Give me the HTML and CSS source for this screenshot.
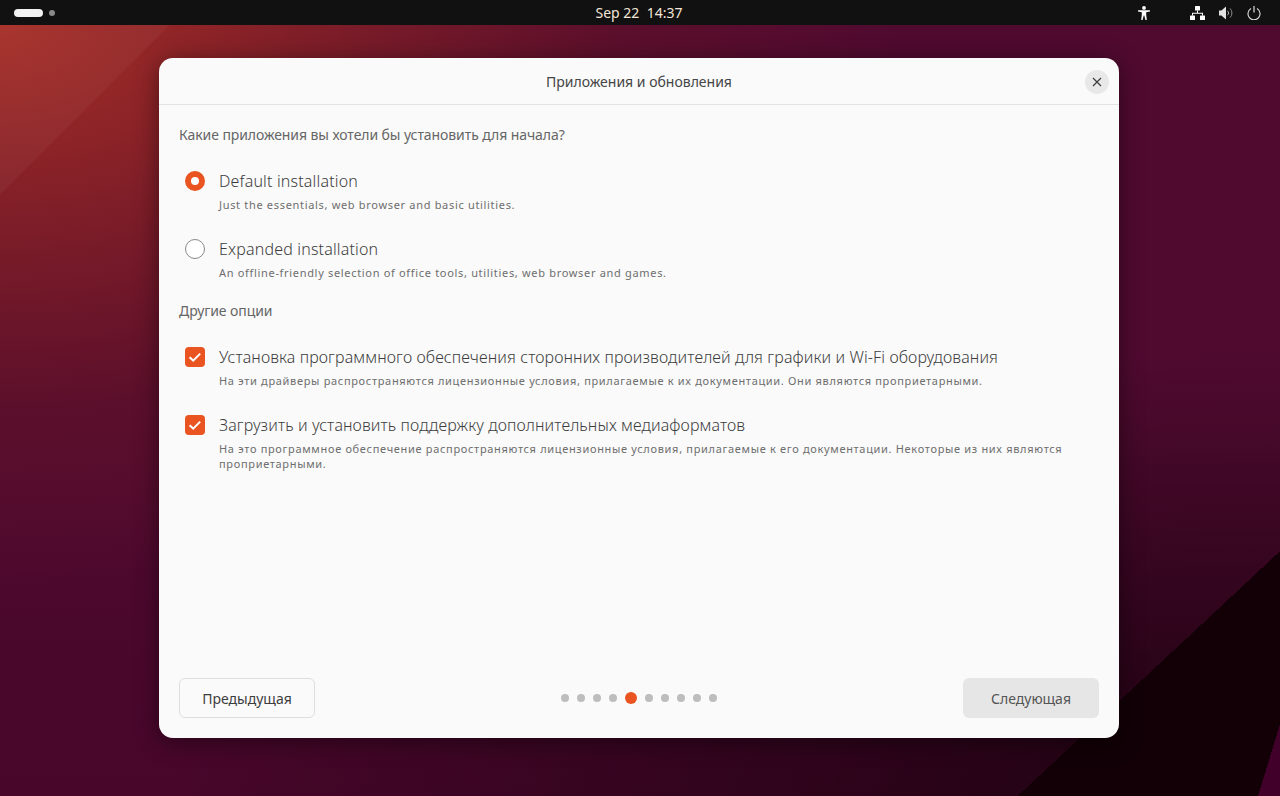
FILE: index.html
```html
<!DOCTYPE html>
<html lang="ru">
<head>
    <meta charset="UTF-8">
    <meta name="viewport" content="width=device-width, initial-scale=1.0">
    <title>Приложения и обновления</title>
    <link rel="stylesheet" href="styles.css">
</head>
<body>
    <div class="topbar">
        <div class="topbar-left">
            <span class="workspace-active"></span>
            <span class="workspace-dot"></span>
        </div>
        <div class="topbar-clock">Sep 22&nbsp;&nbsp;14:37</div>
        <div class="topbar-right">
            <svg class="tray-a11y" width="12" height="14" viewBox="0 0 12 14" fill="#fff">
                <circle cx="6" cy="1.9" r="1.9"/>
                <path d="M0 4.3h12v1.2L8.2 6.2v2.6L8.8 14H7.4L6.3 9.6h-.6L4.6 14H3.2l.6-5.2V6.2L0 5.5z"/>
            </svg>
            <svg class="tray-net" width="15" height="14" viewBox="0 0 15 14" fill="#fff">
                <rect x="5" y="0" width="5" height="4.4" rx=".5"/>
                <rect x="0" y="9.5" width="5" height="4.5" rx=".5"/>
                <rect x="10" y="9.5" width="5" height="4.5" rx=".5"/>
                <path d="M7 4.4h1v2.4h5V9.5h-1V7.8H3v1.7H2V6.8h5z"/>
            </svg>
            <svg class="tray-vol" width="14" height="14" viewBox="0 0 14 14">
                <path d="M0 4.5h2.4L7 .5v13L2.4 9.5H0z" fill="#e2e2e2"/>
                <path d="M8.6 4.8a3 3 0 0 1 0 4.4" fill="none" stroke="#aaa"/>
                <path d="M11 2.4a6.4 6.4 0 0 1 0 9.2" fill="none" stroke="#8a8a8a"/>
            </svg>
            <svg class="tray-power" width="14" height="14" viewBox="0 0 14 14" fill="none" stroke="#ddd" stroke-width="1.1">
                <path d="M4 2.6a6 6 0 1 0 6 0"/>
                <path d="M7 0v6.5" stroke-width="1.2"/>
            </svg>
        </div>
    </div>

    <div class="desktop">
        <div class="window">
            <div class="window-header">
                <h1 class="window-title">Приложения и обновления</h1>
                <button class="close-button" type="button">
                    <svg width="10" height="10" viewBox="0 0 10 10" fill="none" stroke="#3d3d3d" stroke-width="1.2">
                        <path d="M1 1l8 8M9 1l-8 8"/>
                    </svg>
                </button>
            </div>

            <div class="window-content">
                <p class="section-label">Какие приложения вы хотели бы установить для начала?</p>

                <div class="option-list">
                    <div class="option">
                        <span class="radio radio-checked"></span>
                        <div class="option-text">
                            <div class="option-title title-latin">Default installation</div>
                            <div class="option-desc">Just the essentials, web browser and basic utilities.</div>
                        </div>
                    </div>
                    <div class="option">
                        <span class="radio"></span>
                        <div class="option-text">
                            <div class="option-title title-latin">Expanded installation</div>
                            <div class="option-desc">An offline-friendly selection of office tools, utilities, web browser and games.</div>
                        </div>
                    </div>
                </div>

                <p class="section-label section-other">Другие опции</p>

                <div class="option-list">
                    <div class="option">
                        <span class="checkbox">
                            <svg width="14" height="14" viewBox="0 0 14 14" fill="none" stroke="#fff" stroke-width="2">
                                <path d="M1.6 7.2l3.6 3.4 7-7"/>
                            </svg>
                        </span>
                        <div class="option-text">
                            <div class="option-title">Установка программного обеспечения сторонних производителей для графики и Wi-Fi оборудования</div>
                            <div class="option-desc">На эти драйверы распространяются лицензионные условия, прилагаемые к их документации. Они являются проприетарными.</div>
                        </div>
                    </div>
                    <div class="option">
                        <span class="checkbox">
                            <svg width="14" height="14" viewBox="0 0 14 14" fill="none" stroke="#fff" stroke-width="2">
                                <path d="M1.6 7.2l3.6 3.4 7-7"/>
                            </svg>
                        </span>
                        <div class="option-text">
                            <div class="option-title">Загрузить и установить поддержку дополнительных медиаформатов</div>
                            <div class="option-desc">На это программное обеспечение распространяются лицензионные условия, прилагаемые к его документации. Некоторые из них являются проприетарными.</div>
                        </div>
                    </div>
                </div>
            </div>

            <div class="window-footer">
                <button class="nav-button" type="button">Предыдущая</button>
                <div class="steps">
                    <span class="step"></span>
                    <span class="step"></span>
                    <span class="step"></span>
                    <span class="step"></span>
                    <span class="step step-active"></span>
                    <span class="step"></span>
                    <span class="step"></span>
                    <span class="step"></span>
                    <span class="step"></span>
                    <span class="step"></span>
                </div>
                <button class="nav-button nav-next" type="button">Следующая</button>
            </div>
        </div>
    </div>
</body>
</html>
```

FILE: styles.css
```css
/* Desktop */
html, body {
    height: 100%;
}
body {
    margin: 0;
    display: flex;
    flex-direction: column;
    overflow: hidden;
    font-family: "Noto Sans", "Open Sans", sans-serif;
    color: #3d3d3d;
}

/* Top bar */
.topbar {
    height: 25px;
    flex: none;
    background-color: #111;
    position: relative;
    display: flex;
    justify-content: space-between;
    align-items: center;
}
.topbar-left {
    display: flex;
    align-items: center;
    gap: 6px;
    padding-left: 14px;
}
.workspace-active {
    width: 29px;
    height: 8px;
    border-radius: 4px;
    background-color: #f2f2f2;
}
.workspace-dot {
    width: 6px;
    height: 6px;
    border-radius: 50%;
    background-color: #8a8a8a;
}
.topbar-clock {
    position: absolute;
    left: 0;
    right: 2px;
    text-align: center;
    font-size: 14px;
    color: #f3e6d8;
}
.topbar-right {
    display: flex;
    align-items: center;
    padding-right: 19px;
}
.tray-a11y { margin-right: 40px; }
.tray-net { margin-right: 14px; }
.tray-vol { margin-right: 14px; }

/* Wallpaper */
.desktop {
    flex: 1;
    display: flex;
    justify-content: center;
    padding: 33px 2px 58px 0;
    background-color: #4f0a30;
    background-image:
        linear-gradient(287deg, #41002a 21px, transparent 21px),
        linear-gradient(317deg, #120006 179px, transparent 179px),
        linear-gradient(135deg, rgba(255, 255, 255, 0.035) 120px, transparent 120px),
        radial-gradient(ellipse 900px 560px at 0 0, #a62e26 0, #7f1e28 34%, #5c0f2b 68%, transparent 100%),
        radial-gradient(ellipse 1100px 450px at 100% 100%, rgba(10, 0, 5, 0.7) 0, transparent 100%),
        linear-gradient(180deg, #500a30 50%, #47062a 100%);
}

/* Window */
.window {
    width: 960px;
    height: 680px;
    background-color: #fafafa;
    border-radius: 14px;
    box-shadow: 0 4px 24px rgba(0, 0, 0, 0.45);
    display: flex;
    flex-direction: column;
}
.window-header {
    height: 46px;
    flex: none;
    border-bottom: 1px solid #e3e3e3;
    position: relative;
    display: flex;
    justify-content: center;
    align-items: center;
}
.window-title {
    margin: 0;
    font-size: 14px;
    font-weight: 400;
    color: #454545;
}
.close-button {
    position: absolute;
    top: 12px;
    right: 10px;
    width: 24px;
    height: 24px;
    padding: 0;
    border: none;
    border-radius: 50%;
    background-color: #e8e8e8;
    display: flex;
    justify-content: center;
    align-items: center;
}

/* Content */
.window-content {
    flex: 1;
    padding: 20px 20px 0;
}
.section-label {
    margin: 0;
    font-size: 14px;
    line-height: 20px;
    letter-spacing: -0.08px;
    color: #666;
}
.section-other {
    margin-top: 21px;
}
.option-list {
    margin-top: 26px;
    display: flex;
    flex-direction: column;
    gap: 27px;
}
.option {
    display: flex;
    align-items: flex-start;
    padding-left: 6px;
    gap: 14px;
}
.option-text {
    flex: 1;
}
.option-title {
    font-size: 16px;
    font-weight: 300;
    line-height: 20px;
    letter-spacing: 0.11px;
    color: #3d3d3d;
}
.title-latin {
    letter-spacing: 0.17px;
}
.option-desc {
    margin-top: 6px;
    font-size: 11px;
    line-height: 15px;
    letter-spacing: 0.68px;
    color: #6e6e6e;
}
.radio {
    width: 20px;
    height: 20px;
    flex: none;
    box-sizing: border-box;
    border: 1px solid #888;
    border-radius: 50%;
    background-color: #fff;
}
.radio-checked {
    border: 6px solid #e95420;
}
.checkbox {
    width: 20px;
    height: 20px;
    flex: none;
    border-radius: 4px;
    background-color: #e95420;
    display: flex;
    justify-content: center;
    align-items: center;
}

/* Footer */
.window-footer {
    flex: none;
    padding: 0 20px 20px;
    display: flex;
    justify-content: space-between;
    align-items: center;
}
.nav-button {
    width: 136px;
    height: 40px;
    box-sizing: border-box;
    border: 1px solid #dedede;
    border-radius: 6px;
    background-color: #fafafa;
    font-family: inherit;
    font-size: 14px;
    color: #3d3d3d;
}
.nav-next {
    border: none;
    background-color: #e6e6e6;
    color: #555;
}
.steps {
    display: flex;
    align-items: center;
    gap: 8px;
}
.step {
    width: 8px;
    height: 8px;
    border-radius: 50%;
    background-color: #bdbdbd;
}
.step-active {
    width: 12px;
    height: 12px;
    background-color: #e95420;
}
```
